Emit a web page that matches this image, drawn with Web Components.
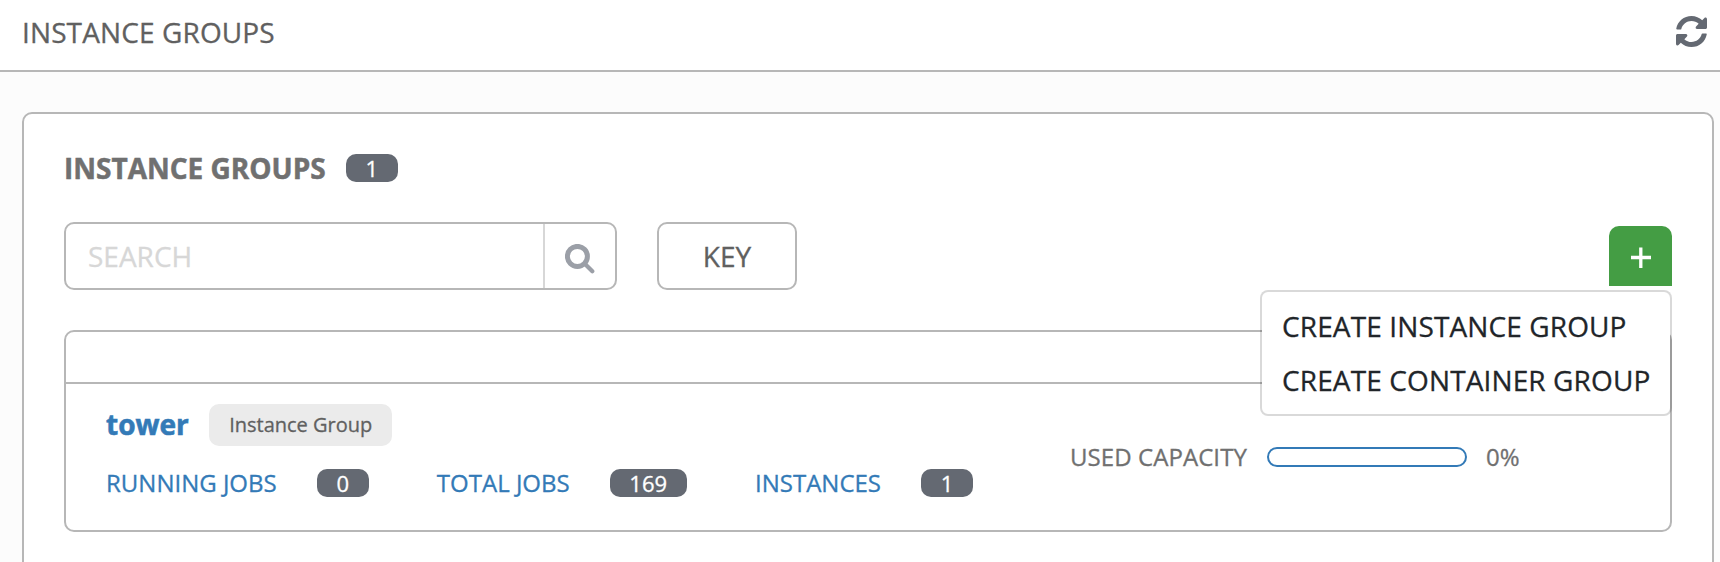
<!DOCTYPE html>
<html lang="en">
<head>
<meta charset="utf-8">
<title>Instance Groups</title>
<style>
html,body{margin:0;height:100%;overflow:hidden;background:#fcfcfc}
body{font-family:"Open Sans",sans-serif;font-size:28px;line-height:1.4;color:#707070;-webkit-text-stroke:.3px}
</style>
</head>
<body>
<ig-app></ig-app>
<script>
function define(name, html) {
  const t = document.createElement('template');
  t.innerHTML = html;
  customElements.define(name, class extends HTMLElement {
    constructor() {
      super();
      this.attachShadow({ mode: 'open' }).appendChild(t.content.cloneNode(true));
    }
  });
}

define('ig-badge', `<style>
:host{display:inline-flex;align-items:center;justify-content:center;box-sizing:border-box;height:28px;padding:0 19.7px;border-radius:10px;background:#646972;color:#fff;font-size:22px;line-height:28px;font-weight:400;letter-spacing:0}
</style><slot></slot>`);

define('ig-header', `<style>
:host{display:flex;box-sizing:border-box;height:72px;border-bottom:2px solid #b7b7b7;background:#fff;color:#606060;padding:0 13px 0 22px;justify-content:space-between;align-items:flex-start}
span{line-height:38px;margin-top:13px;letter-spacing:.12px}
svg{display:block;width:31px;height:31px;margin-top:15.5px}
</style><span><slot></slot></span>
<svg viewBox="8 8 496 496" fill="#646972"><path d="M370.72 133.28C339.458 104.008 298.888 87.962 255.848 88c-77.458.068-144.328 53.178-162.791 126.85-1.344 5.363-6.122 9.15-11.651 9.15H24.103c-7.498 0-13.194-6.807-11.807-14.176C33.933 94.924 134.813 8 256 8c66.448 0 126.791 26.136 171.315 68.685L463.03 40.97C478.149 25.851 504 36.559 504 57.941V192c0 13.255-10.745 24-24 24H345.941c-21.382 0-32.09-25.851-16.971-40.971l41.75-41.749zM32 296h134.059c21.382 0 32.09 25.851 16.971 40.971l-41.75 41.75c31.262 29.273 71.835 45.319 114.876 45.28 77.418-.07 144.315-53.144 162.787-126.849 1.344-5.363 6.122-9.15 11.651-9.15h57.304c7.498 0 13.194 6.807 11.807 14.176C478.067 417.076 377.187 504 256 504c-66.448 0-126.791-26.136-171.315-68.685L48.97 471.03C33.851 486.149 8 475.441 8 454.059V320c0-13.255 10.745-24 24-24z"/></svg>`);

define('ig-search', `<style>
:host{display:flex;box-sizing:border-box;width:553px;height:68px;border:2px solid #b7b7b7;border-radius:10px;background:#fff}
.field{flex:1;padding-left:22px;line-height:64px;color:#d7d7d7}
.go{width:70px;border-left:2px solid #d7d7d7}
svg{display:block;width:30px;height:30px;margin:20px 0 0 20px}
</style><div class="field"><slot></slot></div>
<div class="go"><svg viewBox="0 0 30 30" fill="none" stroke="#9b9fa7" stroke-linecap="round"><circle cx="12.4" cy="12.4" r="10" stroke-width="5"/><path d="M20 20 27.3 27.3" stroke-width="4.2"/></svg></div>`);

define('ig-button', `<style>
:host{display:block;box-sizing:border-box;width:140px;height:68px;border:2px solid #b7b7b7;border-radius:10px;background:#fff;color:#606060;text-align:center;line-height:64px}
</style><slot></slot>`);

define('ig-add', `<style>
:host{display:block;position:relative;width:63px;height:60px;border-radius:10px 10px 0 0;background:#449d44}
svg{display:block;width:63px;height:60px}
.menu{position:absolute;top:64px;right:0;z-index:2;box-sizing:border-box;width:412px;height:126px;padding:7px 0;border:2px solid rgba(0,0,0,.15);border-radius:8px;background:#fff;background-clip:padding-box;color:#212529}
</style><svg viewBox="0 0 63 60"><path d="M22 31.5H42M31.8 21.5V42" stroke="#fff" stroke-width="3.3"/></svg>
<div class="menu"><slot></slot></div>`);

define('ig-menu-item', `<style>
:host{display:block;height:54px;line-height:54px;padding-left:20px;white-space:nowrap;letter-spacing:.12px}
</style><slot></slot>`);

define('ig-stat', `<style>
:host{display:flex;align-items:center;gap:40px;color:#337ab7;font-size:24px;line-height:32px;white-space:nowrap}
</style><slot></slot><ig-badge><slot name="count"></slot></ig-badge>`);

define('ig-capacity', `<style>
:host{display:flex;align-items:center;font-size:24px;line-height:32px;color:#707070;white-space:nowrap;letter-spacing:.07px}
.bar{box-sizing:border-box;width:200px;height:20px;border:2px solid #337ab7;border-radius:10px;margin:0 19px 0 20px}
</style><slot></slot><div class="bar"></div><slot name="value"></slot>`);

define('ig-row', `<style>
:host{display:flex;height:146px;padding-left:40px;box-sizing:border-box}
.main{width:964px}
.name{display:flex;align-items:center;gap:20px;margin-top:20px;height:42px}
b{color:#337ab7;-webkit-text-stroke:.6px}
.tag{box-sizing:border-box;height:42px;width:183px;padding-left:1px;text-align:center;border-radius:10px;background:#ebebeb;color:#606060;font-size:20px;line-height:42px}
.stats{display:flex;gap:68.2px;margin-top:23px;height:28px;align-items:center}
ig-capacity{height:20px;margin-top:63px}
</style><div class="main"><div class="name"><b><slot name="name"></slot></b><span class="tag"><slot name="type"></slot></span></div>
<div class="stats"><ig-stat>RUNNING JOBS<span slot="count">0</span></ig-stat><ig-stat>TOTAL JOBS<span slot="count">169</span></ig-stat><ig-stat>INSTANCES<span slot="count">1</span></ig-stat></div></div>
<ig-capacity>USED CAPACITY<span slot="value">0%</span></ig-capacity>`);

define('ig-list', `<style>
:host{display:block;box-sizing:border-box;height:202px;border:2px solid #b7b7b7;border-radius:10px;margin-top:40px}
.head{height:50px;border-bottom:2px solid #b7b7b7}
</style><div class="head"></div><slot></slot>`);

define('ig-panel', `<style>
:host{display:block;box-sizing:border-box;margin:40px 6px 0 22px;height:560px;padding:40px;border:2px solid #b7b7b7;border-radius:10px;background:#fff}
.title{display:flex;align-items:center;gap:20px;height:28px;font-weight:700;color:#707070}
.title span{line-height:40px;-webkit-text-stroke:.5px}
.tools{display:flex;margin-top:40px;height:68px}
ig-button{margin-left:40px}
ig-add{margin:4px 0 0 auto}
</style><div class="title"><span>INSTANCE GROUPS</span><ig-badge>1</ig-badge></div>
<div class="tools"><ig-search>SEARCH</ig-search><ig-button>KEY</ig-button>
<ig-add><ig-menu-item>CREATE INSTANCE GROUP</ig-menu-item><ig-menu-item>CREATE CONTAINER GROUP</ig-menu-item></ig-add></div>
<slot></slot>`);

define('ig-app', `<style>:host{display:block;height:562px;overflow:hidden}</style>
<ig-header>INSTANCE GROUPS</ig-header>
<ig-panel><ig-list><ig-row><span slot="name">tower</span><span slot="type">Instance Group</span></ig-row></ig-list></ig-panel>`);
</script>
</body>
</html>
